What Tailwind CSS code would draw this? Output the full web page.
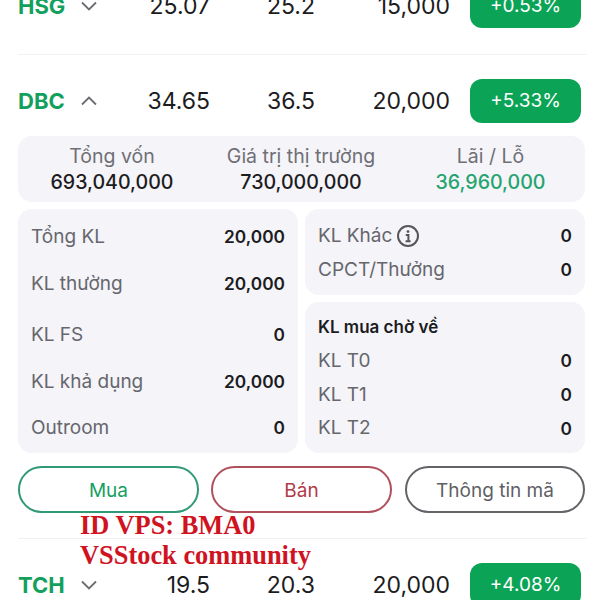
<!DOCTYPE html>
<html lang="en">
  <head>
    <meta charset="UTF-8" />
    <title>Danh mục</title>
    <script src="https://cdn.jsdelivr.net/npm/@tailwindcss/browser@4"></script>
  </head>
  <body class="bg-white font-['Inter',sans-serif] text-[#1c1c1e]">
    <div class="relative w-[600px] h-[600px] overflow-hidden">
      <div class="mt-[-16px] pl-[18px] pr-[15px]">
        <!-- HSG -->
        <div class="flex items-center h-[44px]">
          <span class="w-[62px] text-[22px] font-bold text-[#12a05c]">HSG</span>
          <svg class="w-[18px] h-[18px] text-[#6b6b70]" viewBox="0 0 18 18" fill="none" stroke="currentColor" stroke-width="1.8"><path d="M2 5.5l7 7 7-7" /></svg>
          <span class="w-[112px] text-right text-[23px]">25.07</span>
          <span class="w-[105px] text-right text-[23px]">25.2</span>
          <span class="w-[135px] text-right text-[23px]">15,000</span>
          <span class="ml-[20px] w-[111px] h-[44px] rounded-[12px] bg-[#0ba456] text-white text-[19px] flex items-center justify-center">+0.53%</span>
        </div>
        <div class="mt-[26px] h-[1px] bg-[#f1f1f4] mr-[-2px]"></div>

        <!-- DBC -->
        <div class="mt-[24px] flex items-center h-[44px]">
          <span class="w-[62px] text-[22px] font-bold text-[#12a05c]">DBC</span>
          <svg class="w-[18px] h-[18px] text-[#6b6b70]" viewBox="0 0 18 18" fill="none" stroke="currentColor" stroke-width="1.8"><path d="M2 12.5l7-7 7 7" /></svg>
          <span class="w-[112px] text-right text-[23px]">34.65</span>
          <span class="w-[105px] text-right text-[23px]">36.5</span>
          <span class="w-[135px] text-right text-[23px]">20,000</span>
          <span class="ml-[20px] w-[111px] h-[44px] rounded-[12px] bg-[#0ba456] text-white text-[19px] flex items-center justify-center">+5.33%</span>
        </div>

        <!-- tong quan -->
        <div class="mt-[13px] w-[567px] h-[66px] rounded-[14px] bg-[#f4f4f9] flex items-center pt-[1px]">
          <div class="w-[188px] text-center">
            <p class="text-[19.5px] leading-[26px] text-[#6f6f75]">Tổng vốn</p>
            <p class="text-[19.6px] leading-[27px] font-medium">693,040,000</p>
          </div>
          <div class="w-[190px] text-center">
            <p class="text-[19.5px] leading-[26px] text-[#6f6f75]">Giá trị thị trường</p>
            <p class="text-[19.6px] leading-[27px] font-medium">730,000,000</p>
          </div>
          <div class="w-[189px] text-center">
            <p class="text-[19.5px] leading-[26px] text-[#6f6f75]">Lãi / Lỗ</p>
            <p class="text-[19.6px] leading-[27px] font-medium text-[#25a46f]">36,960,000</p>
          </div>
        </div>

        <!-- chi tiet -->
        <div class="mt-[7px] flex gap-[7px] w-[567px] h-[244px]">
          <div class="w-[280px] rounded-[14px] bg-[#f4f4f9] pl-[13px] pr-[13px] pt-[9px]">
            <div class="flex items-center justify-between h-[38px] text-[19px] text-[#66666c]"><span>Tổng KL</span><span class="text-[17.3px] font-semibold text-[#1c1c1e]">20,000</span></div>
            <div class="mt-[9px] flex items-center justify-between h-[38px] text-[19px] text-[#66666c]"><span>KL thường</span><span class="text-[17.3px] font-semibold text-[#1c1c1e]">20,000</span></div>
            <div class="mt-[13px] flex items-center justify-between h-[38px] text-[19px] text-[#66666c]"><span>KL FS</span><span class="text-[17.3px] font-semibold text-[#1c1c1e]">0</span></div>
            <div class="mt-[9px] flex items-center justify-between h-[38px] text-[19px] text-[#66666c]"><span>KL khả dụng</span><span class="text-[17.3px] font-semibold text-[#1c1c1e]">20,000</span></div>
            <div class="mt-[8px] flex items-center justify-between h-[38px] text-[19px] text-[#66666c]"><span>Outroom</span><span class="text-[17.3px] font-semibold text-[#1c1c1e]">0</span></div>
          </div>
          <div class="w-[280px] flex flex-col gap-[7px]">
            <div class="h-[86px] rounded-[14px] bg-[#f4f4f9] pl-[13px] pr-[13px] pt-[10px]">
              <div class="flex items-center justify-between h-[34px] text-[19px] text-[#66666c]">
                <span class="flex items-center gap-[4px]">KL Khác
                  <svg class="w-[24px] h-[24px]" viewBox="0 0 24 24" fill="none" stroke="#55555a"><circle cx="12" cy="12" r="10" stroke-width="2" /><circle cx="12" cy="7.6" r="1.4" fill="#55555a" stroke="none" /><path d="M9.8 11h2.6v6M9.6 17.2h5" stroke-width="2" /></svg>
                </span>
                <span class="text-[17.3px] font-semibold text-[#1c1c1e]">0</span>
              </div>
              <div class="flex items-center justify-between h-[34px] text-[19px] text-[#66666c]"><span>CPCT/Thưởng</span><span class="text-[17.3px] font-semibold text-[#1c1c1e]">0</span></div>
            </div>
            <div class="flex-1 rounded-[14px] bg-[#f4f4f9] pl-[13px] pr-[13px] pt-[9px]">
              <p class="h-[33px] flex items-center text-[17px] font-semibold">KL mua chờ về</p>
              <div class="flex items-center justify-between h-[34px] text-[19px] text-[#66666c]"><span>KL T0</span><span class="text-[17.3px] font-semibold text-[#1c1c1e]">0</span></div>
              <div class="flex items-center justify-between h-[34px] text-[19px] text-[#66666c]"><span>KL T1</span><span class="text-[17.3px] font-semibold text-[#1c1c1e]">0</span></div>
              <div class="flex items-center justify-between h-[33px] text-[19px] text-[#66666c]"><span>KL T2</span><span class="text-[17.3px] font-semibold text-[#1c1c1e]">0</span></div>
            </div>
          </div>
        </div>

        <!-- nut -->
        <div class="mt-[13px] flex w-[567px] text-[19px]">
          <button class="w-[181px] h-[47px] pt-[3px] rounded-full border-2 border-[#2f9a73] text-[#14a05f]">Mua</button>
          <button class="ml-[12px] w-[181px] h-[47px] pt-[3px] rounded-full border-2 border-[#b0505c] text-[#b03a48]">Bán</button>
          <button class="ml-[13px] w-[180px] h-[47px] pt-[3px] rounded-full border-2 border-[#636368] text-[#5f5f64]">Thông tin mã</button>
        </div>
        <div class="mt-[25px] h-[1px] bg-[#f1f1f4] mr-[-2px]"></div>

        <!-- TCH -->
        <div class="mt-[24px] flex items-center h-[44px]">
          <span class="w-[62px] text-[22px] font-bold text-[#12a05c]">TCH</span>
          <svg class="w-[18px] h-[18px] text-[#6b6b70]" viewBox="0 0 18 18" fill="none" stroke="currentColor" stroke-width="1.8"><path d="M2 5.5l7 7 7-7" /></svg>
          <span class="w-[112px] text-right text-[23px]">19.5</span>
          <span class="w-[105px] text-right text-[23px]">20.3</span>
          <span class="w-[135px] text-right text-[23px]">20,000</span>
          <span class="ml-[20px] w-[111px] h-[44px] rounded-[12px] bg-[#0ba456] text-white text-[19px] flex items-center justify-center">+4.08%</span>
        </div>
      </div>

      <!-- watermark over the screenshot -->
      <div class="absolute left-[80px] top-[510px] font-['Liberation_Serif',serif] font-bold text-[26.4px] leading-[30px] text-[#d0141f] whitespace-nowrap">
        <p>ID VPS: BMA0</p>
        <p>VSStock community</p>
      </div>
    </div>
  </body>
</html>
